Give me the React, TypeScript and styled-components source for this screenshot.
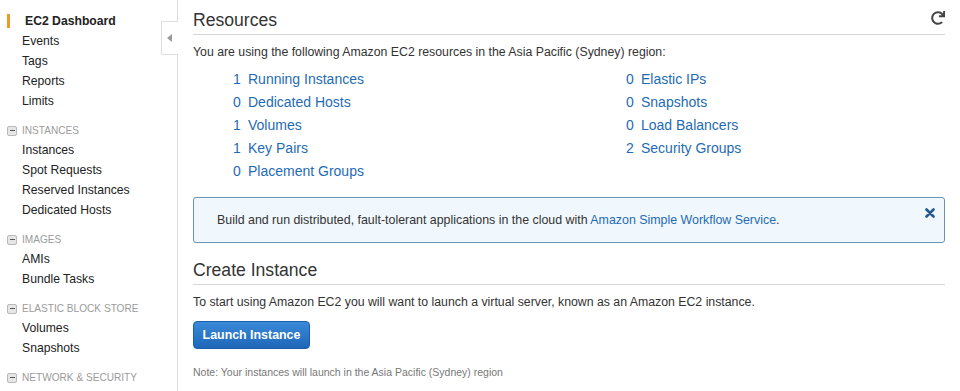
import styled, { createGlobalStyle } from 'styled-components';
import { FaRedo } from 'react-icons/fa';

const GlobalStyle = createGlobalStyle`
  html, body {
    margin: 0;
    padding: 0;
    background: #fff;
    overflow: hidden;
  }
  body {
    font-family: "Liberation Sans", Arial, Helvetica, sans-serif;
    color: #333;
  }
`;

const Page = styled.div`
  display: flex;
  height: 391px;
  overflow: hidden;
`;

const Sidebar = styled.nav`
  position: relative;
  flex: 0 0 177px;
  border-right: 1px solid #dedede;
  padding-top: 11px;
  box-sizing: content-box;
`;

const CollapseTab = styled.div`
  position: absolute;
  top: 21px;
  right: -1px;
  width: 16px;
  height: 32px;
  background: #fff;
  border: 1px solid #dedede;
  border-right: none;
  display: flex;
  align-items: center;
  justify-content: center;
`;

const Arrow = styled.span`
  width: 0;
  height: 0;
  border-top: 4px solid transparent;
  border-bottom: 4px solid transparent;
  border-right: 5px solid #9a9a9a;
  margin-left: -2px;
`;

const NavItem = styled.div<{ $active?: boolean }>`
  display: flex;
  align-items: center;
  height: 20px;
  padding-left: ${({ $active }) => ($active ? '0' : '22px')};
  font-size: 12.2px;
  font-weight: ${({ $active }) => ($active ? 'bold' : 'normal')};
  color: #222;
  white-space: nowrap;
`;

const Marker = styled.span`
  width: 3px;
  height: 14px;
  background: #ec9a2a;
  margin-left: 7px;
  margin-right: 15px;
`;

const Section = styled.div`
  margin-top: 10px;
`;

const SectionHeader = styled.div`
  display: flex;
  align-items: center;
  height: 19px;
  padding-left: 7px;
  font-size: 10.1px;
  color: #9b9b9b;
  white-space: nowrap;
`;

const MinusBox = styled.span`
  display: flex;
  align-items: center;
  justify-content: center;
  width: 8px;
  height: 8px;
  border: 1px solid #b8b8b8;
  border-radius: 2px;
  background: #e6e6e6;
  margin-right: 5px;

  &::after {
    content: '';
    width: 5px;
    height: 1.5px;
    background: #555;
  }
`;

const Main = styled.main`
  flex: 1;
  padding: 0 15px;
  min-width: 0;
`;

const HeadingRow = styled.div<{ $top: number }>`
  display: flex;
  align-items: center;
  justify-content: space-between;
  margin-top: ${({ $top }) => $top}px;
  padding-bottom: 2px;
  border-bottom: 1px solid #d5d5d5;
`;

const Heading = styled.h2`
  margin: 0;
  font-size: 17.6px;
  font-weight: normal;
  line-height: 24px;
  color: #333;
`;

const RefreshButton = styled.span`
  display: flex;
  color: #444;
  margin-top: -4px;
`;

const Text = styled.p<{ $top: number }>`
  margin: ${({ $top }) => $top}px 0 0;
  font-size: 12.3px;
  line-height: 18px;
  color: #333;
`;

const ResourceGrid = styled.div`
  display: grid;
  grid-template-columns: 393px 1fr;
  grid-auto-flow: column;
  grid-template-rows: repeat(5, 23px);
  margin-top: 6px;
  padding-left: 40px;
`;

const ResourceLink = styled.a`
  display: flex;
  align-items: center;
  font-size: 14px;
  color: #1f6bb3;
  text-decoration: none;
  white-space: nowrap;
`;

const Count = styled.span`
  display: inline-block;
  width: 15px;
`;

const InfoBox = styled.div`
  display: flex;
  justify-content: space-between;
  margin-top: 15px;
  padding: 13px 9px 13px 23px;
  background: #f1f8fd;
  border: 1px solid #6a93b4;
  border-radius: 3px;
  font-size: 12.4px;
  line-height: 18px;
`;

const InlineLink = styled.a`
  color: #1f6bb3;
  text-decoration: none;
`;

const CloseIcon = styled.svg`
  display: block;
  margin-top: -3px;
`;

const LaunchButton = styled.button`
  display: block;
  margin-top: 10px;
  width: 117px;
  height: 28px;
  border: 1px solid #1b5ea8;
  border-radius: 4px;
  background: linear-gradient(#3a8ad9, #1e66b8);
  color: #fff;
  font-family: "Liberation Sans", Arial, sans-serif;
  font-size: 12.4px;
  font-weight: bold;
  padding: 0;
`;

const Note = styled.p`
  margin: 16px 0 0;
  font-size: 10.5px;
  line-height: 14px;
  color: #777;
`;

const leftResources = [
  { count: 1, label: 'Running Instances' },
  { count: 0, label: 'Dedicated Hosts' },
  { count: 1, label: 'Volumes' },
  { count: 1, label: 'Key Pairs' },
  { count: 0, label: 'Placement Groups' },
];

const rightResources = [
  { count: 0, label: 'Elastic IPs' },
  { count: 0, label: 'Snapshots' },
  { count: 0, label: 'Load Balancers' },
  { count: 2, label: 'Security Groups' },
];

const sections = [
  { title: 'INSTANCES', items: ['Instances', 'Spot Requests', 'Reserved Instances', 'Dedicated Hosts'] },
  { title: 'IMAGES', items: ['AMIs', 'Bundle Tasks'] },
  { title: 'ELASTIC BLOCK STORE', items: ['Volumes', 'Snapshots'] },
  { title: 'NETWORK & SECURITY', items: [] as string[] },
];

export default function App() {
  return (
    <>
      <GlobalStyle />
      <Page>
        <Sidebar>
          <NavItem $active>
            <Marker />
            EC2 Dashboard
          </NavItem>
          <NavItem>Events</NavItem>
          <NavItem>Tags</NavItem>
          <NavItem>Reports</NavItem>
          <NavItem>Limits</NavItem>
          {sections.map((section) => (
            <Section key={section.title}>
              <SectionHeader>
                <MinusBox />
                {section.title}
              </SectionHeader>
              {section.items.map((item) => (
                <NavItem key={item}>{item}</NavItem>
              ))}
            </Section>
          ))}
          <CollapseTab>
            <Arrow />
          </CollapseTab>
        </Sidebar>

        <Main>
          <HeadingRow $top={8}>
            <Heading>Resources</Heading>
            <RefreshButton>
              <FaRedo size={14} />
            </RefreshButton>
          </HeadingRow>
          <Text $top={8}>
            You are using the following Amazon EC2 resources in the Asia Pacific (Sydney) region:
          </Text>
          <ResourceGrid>
            {leftResources.map((r) => (
              <ResourceLink key={r.label}>
                <Count>{r.count}</Count>
                {r.label}
              </ResourceLink>
            ))}
            {rightResources.map((r) => (
              <ResourceLink key={r.label}>
                <Count>{r.count}</Count>
                {r.label}
              </ResourceLink>
            ))}
          </ResourceGrid>

          <InfoBox>
            <span>
              Build and run distributed, fault-tolerant applications in the cloud with{' '}
              <InlineLink>Amazon Simple Workflow Service</InlineLink>.
            </span>
            <CloseIcon width="10" height="10" viewBox="0 0 10 10">
              <path d="M1.5 1.5 L8.5 8.5 M8.5 1.5 L1.5 8.5" stroke="#23578f" strokeWidth="2.6" strokeLinecap="round" />
            </CloseIcon>
          </InfoBox>

          <HeadingRow $top={15}>
            <Heading>Create Instance</Heading>
          </HeadingRow>
          <Text $top={8}>
            To start using Amazon EC2 you will want to launch a virtual server, known as an Amazon EC2 instance.
          </Text>
          <LaunchButton>Launch Instance</LaunchButton>
          <Note>Note: Your instances will launch in the Asia Pacific (Sydney) region</Note>
        </Main>
      </Page>
    </>
  );
}
